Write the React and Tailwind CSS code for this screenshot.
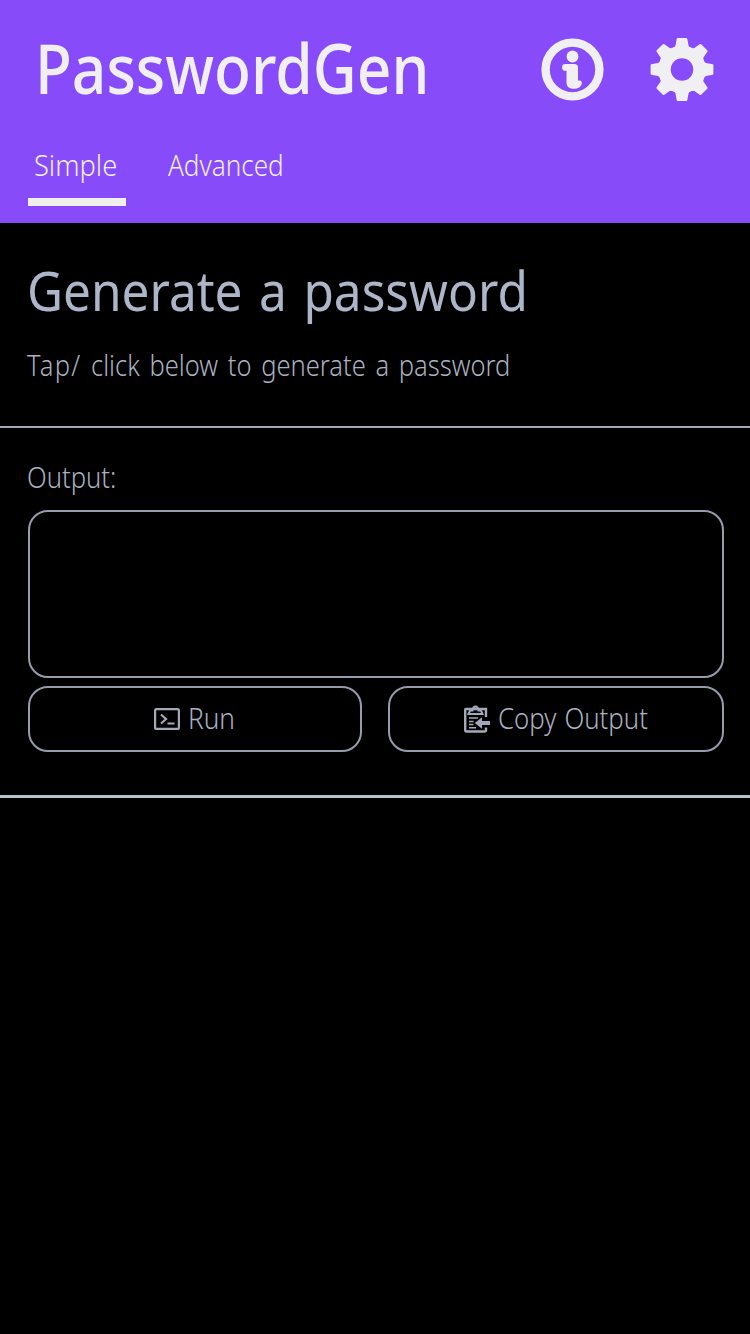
function InfoIcon() {
  return (
    <svg viewBox="0 0 64 64" className="h-16 w-16">
      <circle cx="32.500" cy="31.500" r="26.900" fill="none" stroke="#f0f0f2" strokeWidth="8.400" />
      <circle cx="32.500" cy="18.500" r="5.900" fill="#f0f0f2" />
      <path
        d="M25.500 26H34.500a3.500 3.500 0 0 1 3.500 3.500V42.500H39.500a2.600 2.600 0 0 1 2.300 3c-.500 3.500-4 5.300-8 5.300-5.300 0-7.300-2.800-7.300-6.800V32.800H25.500a3.400 3.400 0 0 1 0-6.800Z"
        fill="#f0f0f2"
      />
    </svg>
  );
}

function GearIcon() {
  const teeth = [0, 45, 90, 135, 180, 225, 270, 315];
  return (
    <svg viewBox="0 0 64 64" className="h-16 w-16" fill="#f0f0f2">
      {teeth.map((a) => (
        <path key={a} d="M26.700 1.200Q27 .6 27.700.6H36.300Q37 .6 37.300 1.200L38.500 8Q39 9.600 41 10.500L32 20 23 10.500Q25 9.600 25.500 8Z" transform={`translate(0 -.5) rotate(${a} 32 32)`} />
      ))}
      <circle cx="32" cy="31.500" r="17.500" fill="none" stroke="#f0f0f2" strokeWidth="12.500" />
    </svg>
  );
}

function TerminalIcon() {
  return (
    <svg viewBox="0 0 26 22" className="h-[22px] w-[26px] shrink-0" fill="none" stroke="#a3a9b8" strokeWidth="2.200">
      <rect x="1.100" y="1.100" width="23.800" height="19.800" rx="1.500" />
      <path d="M7 6.500 12 11 7 15.500M13.500 15.500H20.500" />
    </svg>
  );
}

function ClipboardIcon() {
  return (
    <svg viewBox="0 0 26 28" className="h-7 w-[26px] shrink-0" fill="none" stroke="#a3a9b8" strokeWidth="2.400">
      <path d="M22 12V4H2Q1.200 4 1.200 5V25Q1.200 26.500 2.500 26.500H20.500Q22 26.500 22 25V22.500" />
      <path d="M4.500 9 6 5.500H8.500Q9 1.500 11.500 1.500T14.500 5.500H17L18.500 9Z" strokeWidth="2" />
      <path d="M5 13H14M5 16.500H9.500M5 19.500H9.500M5 22.700H12" strokeWidth="1.600" />
      <path d="M10.800 18 18 12.300V16H26V20H18V23.700Z" fill="#a3a9b8" stroke="none" />
    </svg>
  );
}

export default function App() {
  return (
    <div className="h-[1334px] w-[750px] overflow-hidden bg-black font-['Noto_Sans',sans-serif] text-[28.5px] leading-10 font-light whitespace-nowrap text-[#abb1c0]">
      <header className="flex h-[223px] flex-col bg-[#874bfa] text-[#f0f0f2]">
        <div className="flex h-[140px] items-center pr-9 pl-[35px]">
          <h1 className="w-[505px] pb-[7px] text-[69px] leading-[80px] font-medium">
            <span className="inline-block origin-left scale-x-[0.876]">PasswordGen</span>
          </h1>
          <div className="flex gap-[46px]">
            <InfoIcon />
            <GearIcon />
          </div>
        </div>
        <nav className="flex pl-7">
          <div className="h-[66px] w-[98px] border-b-8 border-[#f0f0f2] pt-[5px] pl-[6px]">
            <span className="inline-block origin-left scale-x-[0.955]">Simple</span>
          </div>
          <div className="pt-[5px] pl-[42px]">
            <span className="inline-block origin-left scale-x-[0.915]">Advanced</span>
          </div>
        </nav>
      </header>

      <section className="h-[205px] border-b-2 border-[#a3a9b8] pt-[33px] pl-[27px]">
        <h2 className="text-[54px] leading-[68px] text-[#adb5c8]">
          <span className="inline-block origin-left scale-x-[0.917] font-normal [word-spacing:4px]">Generate a password</span>
        </h2>
        <p className="mt-[21px]">
          <span className="inline-block origin-left scale-x-[0.895] [word-spacing:3.4px]">
            <span className="tracking-[1.4px]">Tap/</span> click below to generate a password
          </span>
        </p>
      </section>

      <section className="h-[370px] border-b-[3px] border-[#b9c2d0] pt-[29px] pr-[26px] pl-7">
        <label className="-ml-px block h-10">
          <span className="inline-block origin-left scale-x-[0.9]">Output:</span>
        </label>
        <div className="mt-[13px] h-[168px] w-[696px] rounded-[20px] border-2 border-[#969cab]" />
        <div className="mt-2 flex gap-[26px]">
          <button className="flex h-[66px] w-[334px] items-center rounded-[20px] border-2 border-[#969cab] pl-[124px]">
            <TerminalIcon />
            <span className="ml-[8px] inline-block origin-left scale-x-[0.92] pb-[3px]">Run</span>
          </button>
          <button className="flex h-[66px] w-[336px] items-center rounded-[20px] border-2 border-[#969cab] pl-[74px]">
            <ClipboardIcon />
            <span className="ml-[8px] inline-block origin-left scale-x-[0.905] pb-[3px] [word-spacing:1.5px]">Copy Output</span>
          </button>
        </div>
      </section>
    </div>
  );
}
